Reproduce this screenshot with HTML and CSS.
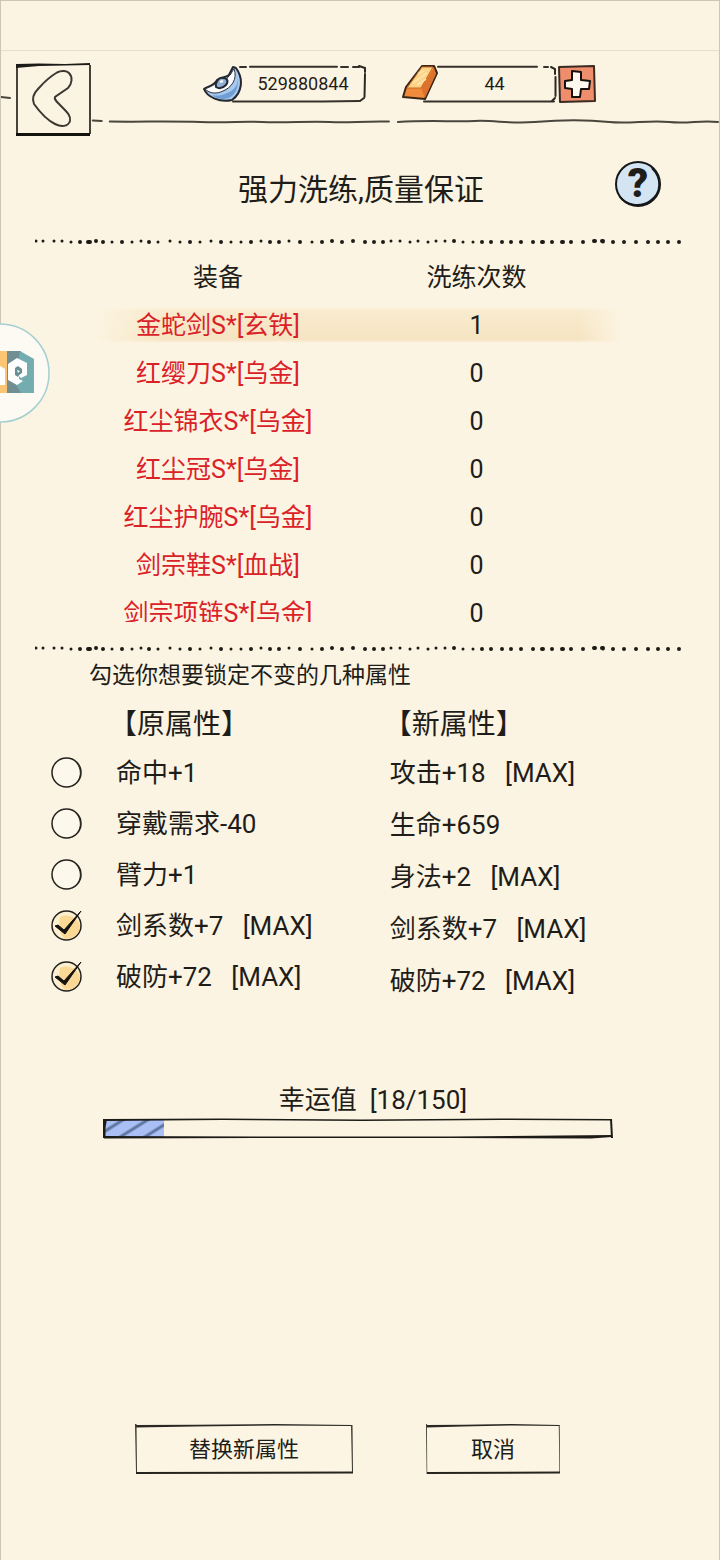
FILE: index.html
```html
<!DOCTYPE html>
<html lang="zh-CN">
<head>
    <meta charset="UTF-8">
    <meta name="viewport" content="width=device-width, initial-scale=1.0">
    <title>强力洗练</title>
    <link rel="stylesheet" href="styles.css">
</head>
<body>
    <svg class="defs" aria-hidden="true">
        <symbol id="dots" viewBox="0 0 648 24" preserveAspectRatio="none">
            <g fill="none" stroke="#1c1a17" stroke-linecap="round">
                <path stroke-width="3" d="M1 11h0M8 11h0M19 11h0M27 11h0M36 12h0M77 12h0M97 12h0M106 11h0M123 12h0M135 11h0M145 12h0M165 12h0M176 11h0M196 12h0M206 12h0M226 11h0M254 11h0M277 12h0M356 11h0M365 11h0M375 12h0M383 11h0M393 12h0M401 11h0M410 11h0M428 12h0M438 12h0M568 12h0"/>
                <path stroke-width="4" d="M45 12h0M53 12h2M61 11h0M68 12h0M87 12h0M114 12h0M155 12h0M186 12h0M216 12h0M235 12h0M244 12h0M265 12h0M287 12h0M297 11h0M307 12h0M318 11h0M330 12h0M339 12h0M348 12h0M419 11h0M447 12h0M456 12h0M467 12h0M476 12h0M486 12h0M498 12h0M507 12h1M517 12h0M527 12h1M536 12h0M548 12h0M559 11h1M567 11h1M578 12h0M589 12h0M601 12h0M613 12h0M623 12h0M633 12h0M644 12h0"/>
            </g>
        </symbol>
        <symbol id="frame" viewBox="0 0 218 50" preserveAspectRatio="none">
            <path d="M1 1 1 49 217 49 216 2Z" fill="#fdf5e3"/>
            <path d="M1 1 60 0.7 140 0 217 1V2L140 1.500 60 2.500 1 3.500Z" fill="#2a2823"/>
            <path d="M0 0H1.5L2 48H1ZM216 1H217.5L218 48H217Z" fill="#3c3932"/>
            <path d="M1 48 218 47.5V49.6L1 50Z" fill="#26241f"/>
        </symbol>
    </svg>

    <div class="page">
        <div class="status"></div>

        <header class="topbar">
            <svg class="topbar-line" viewBox="0 0 720 87" preserveAspectRatio="none" fill="none" stroke="#4a463e" stroke-width="2" stroke-linecap="round" aria-hidden="true">
                <path d="M0 46 9 47M92 69.500 101 70M109 70.500C140 71 170 70 200 71S240 70 262 71S310 70 330 71S360 70 389 70.500M398 71C430 69 455 71 475 70S510 73 535 71S590 69 610 71S650 69 670 71S700 69 719 71"/>
            </svg>
            <div class="topbar-items">
                <button class="back" type="button" aria-label="返回">
                    <svg viewBox="0 0 76 73" fill="none" stroke="#3b3832" stroke-width="2">
                        <path d="M2 1V72M75 2V71" stroke="#46423a"/>
                        <path d="M1 1 24 0.500 50 1 75 0V2L50 2.500 24 3 1 5Z" fill="#1d1b18" stroke="none"/>
                        <path d="M1 71.500H75" stroke="#14120f" stroke-width="3"/>
                        <path d="M54 10C58 14 57 21 53 25L40 34C39 36 41 38 46 43C53 50 56 53 55 58C53 64 46 64 40 61C32 57 24 48 19 41C17 36 18 31 23 26C30 18 36 13 42 9.500C47 7 52 8 54 10Z"/>
                    </svg>
                </button>
                <div class="coin silver">
                    <svg viewBox="0 0 164 38" aria-hidden="true">
                        <path d="M37 2H43M47 1.800H134M138 2H145M150 2H156M30 36.500H120L156 36" fill="none" stroke="#34312b" stroke-width="2" stroke-linecap="round"/>
                        <path d="M156 1 162 3V7M162 9 161.500 32M161 33 157 36" fill="none" stroke="#2a2823" stroke-width="2" stroke-linecap="round"/>
                        <path d="M1 24C4 22 12 20 14 15C18 12 22 13 26 10L30 2L33 3C41 14 39 28 29 35C17 38 4 32 1 24Z" fill="#a8c9ee" stroke="#24282f" stroke-width="2" stroke-linejoin="round"/>
                        <path d="M2 24C6 22 11 21 14 17C18 20 22 17 25 12C28 10 29 6 31 4C35 14 28 23 20 26C14 29 7 29 2 24Z" fill="#fff" stroke="#2c3038"/>
                        <path d="M34 10C36 18 33 25 24 28C18 31 13 31 9 30C15 35 24 35 29 31C35 26 36 17 34 10Z" fill="#6f9ed3"/>
                        <path d="M13 22C12 17 16 12 20 13C24 13 26 16 23 20C20 23 16 24 13 22Z" fill="#8fb0d8" stroke="#24282f" stroke-width="2"/>
                        <path d="M17 17 20 16" stroke="#fff" stroke-width="2"/>
                    </svg>
                    <span>529880844</span>
                </div>
                <div class="coin gold">
                    <svg viewBox="0 0 155 38" aria-hidden="true">
                        <path d="M36 1.800H135M142 2H146M22 36.500H90L152 36.500" fill="none" stroke="#34312b" stroke-width="2" stroke-linecap="round"/>
                        <path d="M149 2 153 4V9M153.500 12V31M153 33 150 36" fill="none" stroke="#2a2823" stroke-width="2" stroke-linecap="round"/>
                        <path d="M20 1H32L35 8L23 34L1 32L4 22Z" fill="#f08b3b" stroke="#3a2617" stroke-width="2" stroke-linejoin="round"/>
                        <path d="M20 2H31L19 23H5Z" fill="#ffd386" stroke="#c56a25"/>
                        <path d="M32 3 34 9 23 33 19 23Z" fill="#dc722c"/>
                        <path d="M16 9 22 6M11 18 25 8M15 20 24 14" stroke="#ffe3a8" stroke-width="2"/>
                    </svg>
                    <span>44</span>
                </div>
                <button class="plus" type="button" aria-label="充值">
                    <svg viewBox="0 0 38 38">
                        <path d="M1 2 36 1 37 36 2 37Z" fill="#ee8e6c" stroke="#3b2a22" stroke-width="2" stroke-linejoin="round"/>
                        <path d="M14 6 23 7V15L32 16 31 24 23 24 22 32H14L14 24 7 23 7 16 14 15Z" fill="#fff8ef" stroke="#16110e" stroke-width="2" stroke-linejoin="round"/>
                    </svg>
                </button>
            </div>
        </header>

        <div class="title-row">
            <h1>强力洗练,质量保证</h1>
            <button class="help" type="button" aria-label="帮助">
                <svg viewBox="0 0 48 48" aria-hidden="true">
                    <circle cx="24" cy="24" r="22" fill="#d3e5f3" stroke="#15171a" stroke-width="2"/>
                    <path d="M38 8C48 18 48 33 36 41C26 48 12 45 6 37" fill="none" stroke="#15171a" stroke-width="2"/>
                </svg>
                <span>?</span>
            </button>
        </div>

        <svg class="dots" aria-hidden="true"><use href="#dots"/></svg>

        <div class="list">
            <table>
                <thead>
                    <tr><th>装备</th><th>洗练次数</th></tr>
                </thead>
                <tbody>
                    <tr class="selected"><td>金蛇剑S*[玄铁]</td><td>1</td></tr>
                    <tr><td>红缨刀S*[乌金]</td><td>0</td></tr>
                    <tr><td>红尘锦衣S*[乌金]</td><td>0</td></tr>
                    <tr><td>红尘冠S*[乌金]</td><td>0</td></tr>
                    <tr><td>红尘护腕S*[乌金]</td><td>0</td></tr>
                    <tr><td>剑宗鞋S*[血战]</td><td>0</td></tr>
                    <tr><td>剑宗项链S*[乌金]</td><td>0</td></tr>
                </tbody>
            </table>
        </div>

        <svg class="dots dots-second" aria-hidden="true"><use href="#dots"/></svg>

        <p class="note">勾选你想要锁定不变的几种属性</p>

        <div class="attrs">
            <section class="attrs-old">
                <h2>【原属性】</h2>
                <label><input type="checkbox"><span>命中+1</span></label>
                <label><input type="checkbox"><span>穿戴需求-40</span></label>
                <label><input type="checkbox"><span>臂力+1</span></label>
                <label><input type="checkbox" checked><span>剑系数+7   [MAX]</span></label>
                <label><input type="checkbox" checked><span>破防+72   [MAX]</span></label>
            </section>
            <section class="attrs-new">
                <h2>【新属性】</h2>
                <p>攻击+18   [MAX]</p>
                <p>生命+659</p>
                <p>身法+2   [MAX]</p>
                <p>剑系数+7   [MAX]</p>
                <p>破防+72   [MAX]</p>
            </section>
        </div>

        <div class="luck">
            <div class="luck-text" id="luck">幸运值  [18/150]</div>
            <div class="bar" role="progressbar" aria-labelledby="luck" aria-valuemin="0" aria-valuemax="150" aria-valuenow="18">
                <div class="bar-fill" style="width: 12%"></div>
                <svg viewBox="0 0 512 21" preserveAspectRatio="none" aria-hidden="true">
                    <path d="M1 1 120 0.500 260 1.500 400 0.500 511 1V2.500L400 2 260 3 120 2 1 3ZM1 18 160 18.500 350 18.500 511 17V19L490 20.500 350 20 160 20 1 20.500Z" fill="#1d1b18"/>
                    <path d="M0 1H4L2.500 10V20H0ZM509 1H511L512 20H510Z" fill="#1d1b18"/>
                </svg>
            </div>
        </div>

        <div class="actions">
            <button class="btn btn-wide" type="button"><svg aria-hidden="true"><use href="#frame"/></svg><span>替换新属性</span></button>
            <button class="btn" type="button"><svg aria-hidden="true"><use href="#frame"/></svg><span>取消</span></button>
        </div>

        <a class="float-logo" href="#" aria-label="悬浮助手">
            <svg viewBox="0 0 50 100">
                <circle cx="0" cy="50" r="49" fill="#fdfaf4" stroke="#a3cfd0" stroke-width="1.500"/>
                <path d="M0 28H7V70H0Z" fill="#fbc574"/>
                <path d="M7 28H21V70H7Z" fill="#718f92"/>
                <path d="M20 28 34 36V70H21L14 58Z" fill="#73adb0"/>
                <path d="M0 43 5 46V62H0Z" fill="#fff"/>
                <path d="M17 35 27 40V52L21 55 19 53V56L23 58 17 62 8 57V41Z" fill="#fff"/>
                <path d="M18 43 22 46V50L19 52 18 54 15 52V45Z" fill="#658e92"/>
                <path d="M17 47 20 48 18 50Z" fill="#fff"/>
            </svg>
        </a>
    </div>
</body>
</html>
```

FILE: styles.css
```css
* {
    box-sizing: border-box;
}
body {
    margin: 0;
    background-color: #fcf4e2;
    color: #1f1d19;
    font-family: Roboto, "Noto Sans CJK SC", sans-serif;
}
h1, h2, p {
    margin: 0;
    font-weight: normal;
}
button {
    padding: 0;
    border: none;
    background: none;
    color: inherit;
    font-family: inherit;
    cursor: pointer;
}
svg {
    display: block;
}
.defs {
    position: absolute;
    width: 0;
    height: 0;
}
.page {
    position: relative;
    min-height: 100vh;
    border: 1px solid #cdc6b6;
    border-bottom: none;
}
.status {
    height: 50px;
    border-bottom: 1px solid #e6dfce;
}

/* 顶部栏 */
.topbar {
    display: grid;
    height: 87px;
}
.topbar-line,
.topbar-items {
    grid-area: 1 / 1;
    width: 100%;
    height: 87px;
}
.topbar-items {
    display: flex;
    align-items: flex-start;
    padding: 12px 0 0 14px;
}
.back {
    width: 76px;
    height: 73px;
    margin-right: 112px;
}
.coin {
    display: grid;
    align-items: center;
    margin-top: 2px;
    font-size: 18px;
    text-align: center;
}
.coin svg,
.coin span {
    grid-area: 1 / 1;
}
.coin span {
    padding-bottom: 2px;
    padding-left: 30px;
}
.silver {
    width: 164px;
    margin-right: 35px;
}
.silver span {
    padding-left: 36px;
}
.gold {
    width: 155px;
}
.plus {
    width: 38px;
    height: 38px;
    margin: 2px 0 0 1px;
}

/* 标题 */
.title-row {
    display: grid;
    grid-template-columns: 1fr auto 1fr;
    align-items: center;
    height: 92px;
    padding-right: 57px;
    padding-left: 59px;
}
.title-row h1 {
    grid-column: 2;
    padding-top: 12px;
    font-size: 30px;
    line-height: 40px;
}
.help {
    display: grid;
    place-items: center;
    justify-self: end;
    width: 48px;
    height: 48px;
    font-size: 40px;
    font-weight: 900;
    line-height: 48px;
}
.help svg,
.help span {
    grid-area: 1 / 1;
}
.help svg {
    width: 48px;
    height: 48px;
}
.dots {
    width: calc(100% - 70px);
    height: 24px;
    margin: 0 36px 0 34px;
}
.dots-second {
    margin-top: 15px;
}

/* 装备列表 */
.list {
    height: 368px;
    margin: 0 86px 0 87px;
    overflow: hidden;
}
.list table {
    width: 100%;
    border-collapse: collapse;
    table-layout: fixed;
    font-size: 25px;
    text-align: center;
}
.list th,
.list td {
    height: 48px;
    padding: 0;
    font-weight: normal;
    line-height: 48px;
}
.list th:first-child,
.list td:first-child {
    width: 260px;
}
.list th:last-child,
.list td:last-child {
    padding-right: 28px;
}
.list td:first-child {
    color: #db2128;
}
.selected {
    background: linear-gradient(90deg, #fcf4e2 1%, transparent 14%, transparent 90%, #fcf4e2 98%), linear-gradient(#fcf4e2, #f8ebce 10%, #f6e4c1 90%, #fcf4e2) no-repeat 0 5px / 100% 36px;
}

/* 属性 */
.note {
    padding-left: 88px;
    font-size: 23px;
    line-height: 30px;
}
.attrs {
    display: flex;
    padding-top: 12px;
    font-size: 26px;
}
.attrs h2 {
    font-size: 28px;
    line-height: 44px;
}
.attrs-old {
    width: 54%;
    padding-left: 50px;
}
.attrs-old h2 {
    padding-left: 58px;
}
.attrs-old label {
    display: flex;
    align-items: center;
    gap: 34px;
    height: 51px;
    white-space: pre;
}
.attrs-old span {
    padding-bottom: 4px;
}
.attrs-old input {
    appearance: none;
    width: 31px;
    height: 31px;
    margin: 0;
    background: url("data:image/svg+xml,%3Csvg xmlns='http://www.w3.org/2000/svg' viewBox='0 0 31 31'%3E%3Ccircle cx='15.500' cy='15.500' r='14.500' fill='%23fdf8ec' stroke='%2323211c' stroke-width='1.500'/%3E%3Cpath d='M24 4C32 12 31 24 21 29' fill='none' stroke='%2323211c' stroke-width='1'/%3E%3C/svg%3E");
}
.attrs-old input:checked {
    background-image: url("data:image/svg+xml,%3Csvg xmlns='http://www.w3.org/2000/svg' viewBox='0 0 31 31'%3E%3Ccircle cx='15.500' cy='15.500' r='14.500' fill='%23fdf0d0' stroke='%2323211c' stroke-width='1.500'/%3E%3Cpath d='M9 7C16 3 27 7 29 16C29 24 22 29 14 29C9 26 7 15 9 7Z' fill='%23fbd994'/%3E%3Cpath d='M4 16 7 15 13 20 30 1 14 24Z' fill='%23151310' stroke='%23151310'/%3E%3C/svg%3E");
}
.attrs-new {
    padding-left: 1px;
}
.attrs-new p {
    line-height: 52px;
    white-space: pre;
}
.attrs-new h2 {
    margin-left: -6px;
}

/* 幸运值 */
.luck {
    margin: 75px 106px 0 102px;
}
.luck-text {
    padding-left: 30px;
    font-size: 26px;
    line-height: 36px;
    text-align: center;
    white-space: pre;
}
.bar {
    display: grid;
    height: 21px;
}
.bar-fill,
.bar svg {
    grid-area: 1 / 1;
    height: 21px;
}
.bar svg {
    width: 100%;
}
.bar-fill {
    border: solid transparent;
    border-width: 2px 0;
    background: repeating-linear-gradient(148deg, #a9bff5 0 8px, #5d759f 10px 11px, #a9bff5 13px) padding-box;
}

/* 底部按钮 */
.actions {
    display: flex;
    gap: 73px;
    padding: 285px 0 80px 134px;
}
.btn {
    display: grid;
    place-items: center;
    width: 134px;
    height: 50px;
    font-size: 22px;
}
.btn-wide {
    width: 218px;
}
.btn svg,
.btn span {
    grid-area: 1 / 1;
}
.btn span {
    padding-bottom: 4px;
}
.btn svg {
    width: 100%;
    height: 50px;
}

.float-logo {
    position: absolute;
    top: 322px;
    left: -1px;
    width: 50px;
    height: 100px;
}
```
